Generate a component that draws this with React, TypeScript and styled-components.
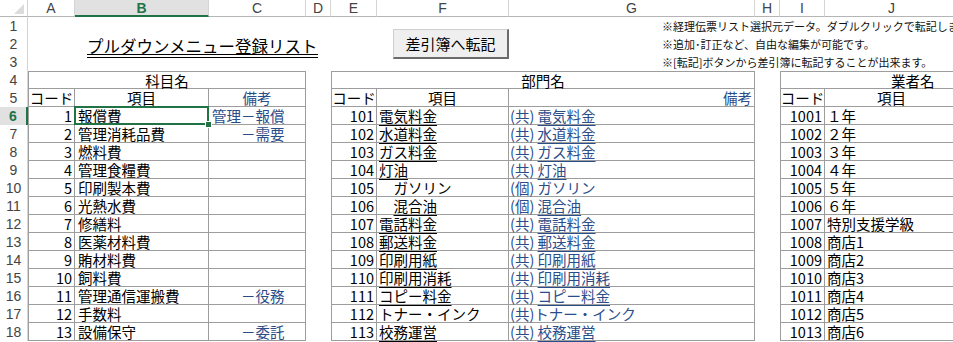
import React from "react";
import styled, { createGlobalStyle, css } from "styled-components";

const GREEN = "#217346";
const LINE = "#9d9d9d";
const BLUE = "#2a4d8a";
const HEAD_LINE = "#d4d4d4";

const GlobalStyle = createGlobalStyle`
  html, body {
    margin: 0;
    padding: 0;
    background: #fff;
    overflow: hidden;
  }
  body {
    font-family: "Noto Sans CJK JP", "Noto Sans", sans-serif;
  }
`;

const Sheet = styled.div`
  position: relative;
  display: grid;
  grid-template-columns: 28px 47px 134px 97px 25px 46px 132px 246px 25px 45px 134px;
  grid-template-rows: 17px repeat(18, 18px);
  width: 953px;
  height: 342px;
  overflow: hidden;
  font-family: "Noto Sans CJK JP", sans-serif;
  font-size: 14.5px;
  color: #000;
`;

const Corner = styled.div`
  box-sizing: border-box;
  display: flex;
  align-items: flex-end;
  justify-content: flex-end;
  padding: 0 3px 2px 0;
  border-right: 1px solid ${HEAD_LINE};
  border-bottom: 1px solid #b5b5b5;
`;

const ColHead = styled.div<{ $active?: boolean }>`
  box-sizing: border-box;
  display: flex;
  align-items: center;
  justify-content: center;
  font-family: "Liberation Sans", Arial, sans-serif;
  font-size: 14px;
  color: #444;
  border-right: 1px solid ${HEAD_LINE};
  border-bottom: 1px solid #b5b5b5;
  ${({ $active }) =>
    $active &&
    css`
      background: #e1e1e1;
      color: ${GREEN};
      font-weight: bold;
      border-bottom: 2px solid ${GREEN};
    `}
`;

const RowHead = styled.div<{ $active?: boolean }>`
  box-sizing: border-box;
  display: flex;
  align-items: center;
  justify-content: center;
  font-family: "Liberation Sans", Arial, sans-serif;
  font-size: 14px;
  color: #444;
  border-right: 1px solid ${HEAD_LINE};
  ${({ $active }) =>
    $active &&
    css`
      background: #e1e1e1;
      color: ${GREEN};
      font-weight: bold;
      border-right: 2px solid ${GREEN};
    `}
`;

const Blank = styled.div<{ $span?: number }>`
  grid-column: span ${({ $span }) => $span ?? 1};
`;

type Align = "left" | "center" | "right";

const Cell = styled.div<{
  $span?: number;
  $align?: Align;
  $pad?: number;
  $box?: boolean;
  $first?: boolean;
  $top?: boolean;
  $blue?: boolean;
  $selected?: boolean;
}>`
  grid-column: span ${({ $span }) => $span ?? 1};
  box-sizing: border-box;
  position: relative;
  display: flex;
  align-items: center;
  justify-content: ${({ $align }) =>
    $align === "right" ? "flex-end" : $align === "center" ? "center" : "flex-start"};
  padding: 1px 2px 0 ${({ $pad }) => $pad ?? 2}px;
  white-space: pre;
  line-height: 16px;
  color: ${({ $blue }) => ($blue ? BLUE : "#000")};
  ${({ $box }) =>
    $box &&
    css`
      border-right: 1px solid ${LINE};
      border-bottom: 1px solid ${LINE};
    `}
  ${({ $first }) => $first && css`border-left: 1px solid ${LINE};`}
  ${({ $top }) => $top && css`border-top: 1px solid ${LINE};`}
  ${({ $selected }) =>
    $selected &&
    css`
      &::after {
        content: "";
        position: absolute;
        left: -1px;
        top: -1px;
        right: -1px;
        bottom: -1px;
        border: 2px solid ${GREEN};
        pointer-events: none;
      }
      &::before {
        content: "";
        position: absolute;
        right: -4px;
        bottom: -4px;
        width: 5px;
        height: 5px;
        background: ${GREEN};
        border: 1px solid #fff;
        z-index: 2;
      }
    `}
`;

const Under = styled.span`
  text-decoration: underline;
  text-decoration-thickness: 1px;
  text-underline-offset: 3px;
`;

const TitleCell = styled.div`
  padding: 1px 0 0 12px;
  white-space: nowrap;
`;

const Title = styled.span`
  display: inline-block;
  font-size: 16.5px;
  line-height: 15px;
  border-bottom: 4px double #000;
`;

const Note = styled.div`
  grid-column: span 4;
  display: flex;
  align-items: center;
  padding-left: 153px;
  font-size: 11px;
  white-space: nowrap;
  color: #111;
`;

const TransferButton = styled.button`
  position: absolute;
  left: 393px;
  top: 29px;
  width: 116px;
  height: 30px;
  box-sizing: border-box;
  padding: 0;
  background: #efefef;
  border: 1px solid #cfcfcf;
  border-right: 2px solid #6b6b6b;
  border-bottom: 2px solid #6b6b6b;
  font-family: "Noto Sans CJK JP", sans-serif;
  font-size: 15px;
  color: #000;
`;

const COLS = ["A", "B", "C", "D", "E", "F", "G", "H", "I", "J"];

const NOTES = [
  "※経理伝票リスト選択元データ。ダブルクリックで転記します。",
  "※追加･訂正など、自由な編集が可能です。",
  "※[転記]ボタンから差引簿に転記することが出来ます。",
];

const KAMOKU: [number, string, string][] = [
  [1, "報償費", "管理－報償"],
  [2, "管理消耗品費", "　　－需要"],
  [3, "燃料費", ""],
  [4, "管理食糧費", ""],
  [5, "印刷製本費", ""],
  [6, "光熱水費", ""],
  [7, "修繕料", ""],
  [8, "医薬材料費", ""],
  [9, "賄材料費", ""],
  [10, "飼料費", ""],
  [11, "管理通信運搬費", "　　－役務"],
  [12, "手数料", ""],
  [13, "設備保守", "　　－委託"],
];

// [code, indent, name, prefix, underlined]
const BUMON: [number, string, string, string, boolean][] = [
  [101, "", "電気料金", "(共) ", true],
  [102, "", "水道料金", "(共) ", true],
  [103, "", "ガス料金", "(共) ", true],
  [104, "", "灯油", "(共) ", true],
  [105, "　", "ガソリン", "(個) ", false],
  [106, "　", "混合油", "(個) ", true],
  [107, "", "電話料金", "(共) ", true],
  [108, "", "郵送料金", "(共) ", true],
  [109, "", "印刷用紙", "(共) ", true],
  [110, "", "印刷用消耗", "(共) ", true],
  [111, "", "コピー料金", "(共) ", true],
  [112, "", "トナー・インク", "(共)", false],
  [113, "", "校務運営", "(共) ", true],
];

const GYOSHA: [number, string][] = [
  [1001, "１年"],
  [1002, "２年"],
  [1003, "３年"],
  [1004, "４年"],
  [1005, "５年"],
  [1006, "６年"],
  [1007, "特別支援学級"],
  [1008, "商店1"],
  [1009, "商店2"],
  [1010, "商店3"],
  [1011, "商店4"],
  [1012, "商店5"],
  [1013, "商店6"],
];

const CornerMark = () => (
  <svg width="10" height="10" viewBox="0 0 10 10">
    <polygon points="10,0 10,10 0,10" fill="#dcdcdc" />
  </svg>
);

const Text = ({ value, under }: { value: string; under: boolean }) =>
  under ? <Under>{value}</Under> : <>{value}</>;

export default function App() {
  return (
    <>
      <GlobalStyle />
      <Sheet>
        <Corner>
          <CornerMark />
        </Corner>
        {COLS.map((c) => (
          <ColHead key={c} $active={c === "B"}>
            {c}
          </ColHead>
        ))}

        {/* rows 1-3: title, notes */}
        <RowHead>1</RowHead>
        <Blank $span={6} />
        <Note>{NOTES[0]}</Note>

        <RowHead>2</RowHead>
        <Blank />
        <TitleCell>
          <Title>プルダウンメニュー登録リスト</Title>
        </TitleCell>
        <Blank $span={4} />
        <Note>{NOTES[1]}</Note>

        <RowHead>3</RowHead>
        <Blank $span={6} />
        <Note>{NOTES[2]}</Note>

        {/* row 4: table captions */}
        <RowHead>4</RowHead>
        <Cell $span={3} $align="center" $box $first $top>
          科目名
        </Cell>
        <Blank />
        <Cell $span={3} $align="center" $box $first $top>
          部門名
        </Cell>
        <Blank />
        <Cell $span={2} $pad={110} $box $first $top>
          業者名
        </Cell>

        {/* row 5: column titles */}
        <RowHead>5</RowHead>
        <Cell $align="center" $box $first>
          コード
        </Cell>
        <Cell $align="center" $box>
          項目
        </Cell>
        <Cell $align="center" $box $blue>
          備考
        </Cell>
        <Blank />
        <Cell $align="center" $box $first>
          コード
        </Cell>
        <Cell $align="center" $box>
          項目
        </Cell>
        <Cell $align="right" $box $blue>
          備考
        </Cell>
        <Blank />
        <Cell $align="center" $box $first>
          コード
        </Cell>
        <Cell $align="center" $box>
          項目
        </Cell>

        {/* rows 6-18 */}
        {KAMOKU.map(([code, name, note], i) => {
          const [bCode, indent, bName, prefix, under] = BUMON[i];
          const [gCode, gName] = GYOSHA[i];
          const row = i + 6;
          return (
            <React.Fragment key={row}>
              <RowHead $active={row === 6}>{row}</RowHead>
              <Cell $align="right" $box $first>
                {code}
              </Cell>
              <Cell $box $pad={3} $selected={row === 6}>
                {name}
              </Cell>
              <Cell $box $pad={3} $blue>
                {note}
              </Cell>
              <Blank />
              <Cell $align="right" $box $first>
                {bCode}
              </Cell>
              <Cell $box $pad={2}>
                {indent}
                <Text value={bName} under={under} />
              </Cell>
              <Cell $box $pad={1} $blue>
                {prefix}
                <Text value={bName} under={under} />
              </Cell>
              <Blank />
              <Cell $align="right" $box $first>
                {gCode}
              </Cell>
              <Cell $box $pad={2}>
                {gName}
              </Cell>
            </React.Fragment>
          );
        })}

        <TransferButton type="button">差引簿へ転記</TransferButton>
      </Sheet>
    </>
  );
}
